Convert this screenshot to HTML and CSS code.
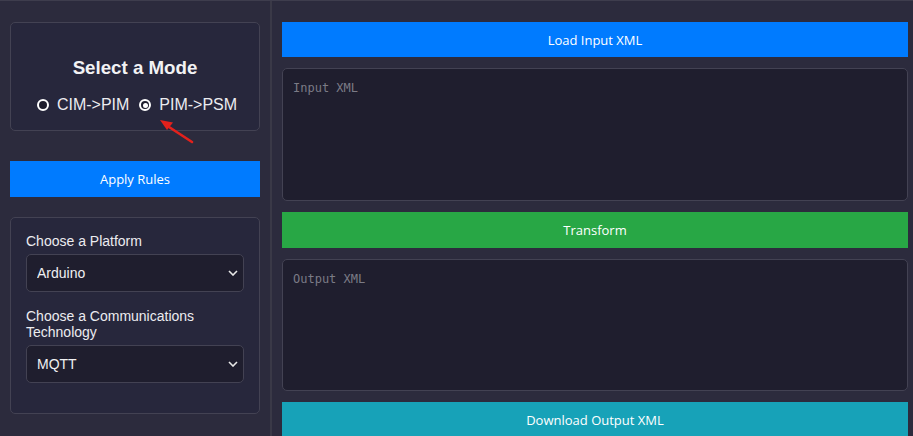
FILE: index.html
```html
<!DOCTYPE html>
<html lang="en">
<head>
<meta charset="utf-8">
<title>Model Transformer</title>
<link rel="stylesheet" href="styles.css">
</head>
<body>
<div class="app">
  <aside class="sidebar">
    <section class="card mode-card">
      <h3 class="mode-title">Select a Mode</h3>
      <div class="radios">
        <label class="radio"><span class="ring"></span>CIM-&gt;PIM</label>
        <label class="radio"><span class="ring checked"></span>PIM-&gt;PSM</label>
      </div>
      <svg class="annot" width="50" height="34" viewBox="0 0 50 34">
        <line x1="35" y1="25" x2="9" y2="8" stroke="#e3211c" stroke-width="2.6" stroke-linecap="round"/>
        <polygon points="3,3 16,5.5 10,13" fill="#e3211c"/>
      </svg>
    </section>
    <button class="btn btn-blue apply">Apply Rules</button>
    <section class="card options-card">
      <div class="field">
        <label class="field-label">Choose a Platform</label>
        <div class="select-wrap">
          <select class="select"><option>Arduino</option></select>
          <svg class="chev" width="10" height="6" viewBox="0 0 10 6"><path d="M1 1 L5 5 L9 1" fill="none" stroke="#e8e8e8" stroke-width="1.6"/></svg>
        </div>
      </div>
      <div class="field">
        <label class="field-label">Choose a Communications Technology</label>
        <div class="select-wrap">
          <select class="select"><option>MQTT</option></select>
          <svg class="chev" width="10" height="6" viewBox="0 0 10 6"><path d="M1 1 L5 5 L9 1" fill="none" stroke="#e8e8e8" stroke-width="1.6"/></svg>
        </div>
      </div>
    </section>
  </aside>
  <main class="main">
    <button class="btn btn-blue bar">Load Input XML</button>
    <textarea class="xml xml-in" placeholder="Input XML"></textarea>
    <button class="btn btn-green bar bar-tall">Transform</button>
    <textarea class="xml xml-out" placeholder="Output XML"></textarea>
    <button class="btn btn-teal bar">Download Output XML</button>
  </main>
</div>
</body>
</html>
```

FILE: styles.css
```css
html, body {
  margin: 0;
  height: 100%;
  overflow: hidden;
}
body {
  background: #2c2b3d;
  border-top: 1px solid #3e3d4d;
  font-family: "Liberation Sans", Arial, sans-serif;
  color: #ececf0;
}
.app {
  display: grid;
  grid-template-columns: 272px 1fr;
  height: 100%;
}
.sidebar {
  border-right: 2px solid #3a3947;
  padding: 21px 10px 0 10px;
}
.card {
  position: relative;
  background: #27273c;
  border: 1px solid #434253;
  border-radius: 5px;
}
.mode-card {
  height: 109px;
  box-sizing: border-box;
  padding: 35px 0 0 0;
  display: flex;
  flex-direction: column;
  align-items: center;
}
.mode-title {
  margin: 0;
  font-size: 18.72px;
  line-height: 20px;
  font-weight: bold;
  color: #f2f2f4;
}
.radios {
  display: flex;
  gap: 10px;
  margin-top: 17px;
  font-size: 16px;
  line-height: 20px;
  margin-left: 4px;
}
.radio {
  display: flex;
  align-items: center;
  gap: 8px;
}
.ring {
  width: 12px;
  height: 12px;
  box-sizing: border-box;
  border: 2px solid #ffffff;
  border-radius: 50%;
  background: #1f1e2e;
  position: relative;
}
.ring.checked::after {
  content: "";
  position: absolute;
  left: 1.5px;
  top: 1.5px;
  width: 5px;
  height: 5px;
  border-radius: 50%;
  background: #ffffff;
}
.annot {
  position: absolute;
  left: 146px;
  top: 94px;
}
.btn {
  display: block;
  width: 100%;
  border: none;
  border-radius: 0;
  color: #ffffff;
  font-family: "Open Sans", "Noto Sans", sans-serif;
  font-size: 13px;
  padding: 0;
  cursor: pointer;
}
.btn-blue { background: #007bff; }
.btn-green { background: #28a745; }
.btn-teal { background: #17a2b8; }
.apply {
  height: 36px;
  margin-top: 30px;
}
.options-card {
  margin-top: 20px;
  padding: 15px 15px 15px 15px;
}
.field {
  margin-bottom: 16px;
}
.field:last-child {
  margin-bottom: 15px;
}
.field-label {
  display: block;
  font-size: 14px;
  line-height: 16px;
  margin-bottom: 5px;
  color: #ececf0;
}
.select-wrap {
  position: relative;
}
.select {
  display: block;
  width: 100%;
  height: 38px;
  appearance: none;
  -webkit-appearance: none;
  background: #1f1e2e;
  border: 1px solid #434253;
  border-radius: 5px;
  color: #f0f0f2;
  font-family: "Liberation Sans", Arial, sans-serif;
  font-size: 14px;
  padding: 0 10px;
  outline: none;
}
.chev {
  position: absolute;
  right: 6px;
  top: 16px;
}
.main {
  display: flex;
  flex-direction: column;
  gap: 11px;
  padding: 21px 5px 0 10px;
  min-width: 0;
}
.bar {
  height: 35px;
  flex: none;
}
.bar-tall {
  height: 36px;
}
.xml {
  display: block;
  flex: none;
  box-sizing: border-box;
  width: 100%;
  background: #1f1e2e;
  border: 1px solid #434253;
  border-radius: 5px;
  padding: 10px;
  color: #e0e0e0;
  font-family: "DejaVu Sans Mono", monospace;
  font-size: 12px;
  line-height: 18px;
  resize: none;
  outline: none;
}
.xml::placeholder {
  color: #7b7b86;
}
.xml-in { height: 133px; }
.xml-out { height: 132px; }
```
